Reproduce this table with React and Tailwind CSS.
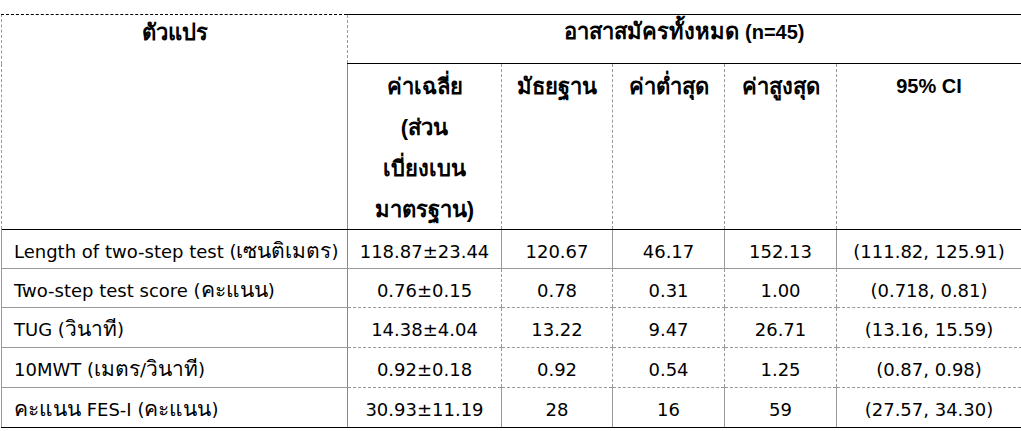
const TH = /([\u0E00-\u0E7F]+)/;

function Mixed({ text, th, lat }) {
  const parts = text.split(TH);
  return (
    <>
      {parts.map((p, i) =>
        p === "" ? null : TH.test(p) ? (
          <span key={i} className={th}>{p}</span>
        ) : (
          <span key={i} className={lat}>{p}</span>
        )
      )}
    </>
  );
}

const bodyTh = "text-[21px]";
const bodyLat = "text-[18px] font-['DejaVu_Sans',sans-serif]";
const headTh = "text-[22px]";
const headLat = "text-[20px]";

export default function App() {
  const rows = [
    ["Length of two-step test (เซนติเมตร)", "118.87±23.44", "120.67", "46.17", "152.13", "(111.82, 125.91)"],
    ["Two-step test score (คะแนน)", "0.76±0.15", "0.78", "0.31", "1.00", "(0.718, 0.81)"],
    ["TUG (วินาที)", "14.38±4.04", "13.22", "9.47", "26.71", "(13.16, 15.59)"],
    ["10MWT (เมตร/วินาที)", "0.92±0.18", "0.92", "0.54", "1.25", "(0.87, 0.98)"],
    ["คะแนน FES-I (คะแนน)", "30.93±11.19", "28", "16", "59", "(27.57, 34.30)"],
  ];
  const rowH = ["h-[39px]", "h-[39px]", "h-[40px]", "h-[40px]", "h-[40px]"];
  const h2 = "align-top text-center font-bold leading-[41px] p-0 ";
  return (
    <div
      className="w-[1021px] h-[431px] bg-white pt-[14px] pl-[1px] text-black"
      style={{ fontFamily: '"Liberation Sans", "Noto Sans", sans-serif' }}
    >
      <table className="table-fixed border-collapse w-[1020px]">
        <colgroup>
          <col className="w-[346px]" />
          <col className="w-[154px]" />
          <col className="w-[111px]" />
          <col className="w-[112px]" />
          <col className="w-[112px]" />
          <col className="w-[185px]" />
        </colgroup>
        <thead>
          <tr className="h-[49px]">
            <th
              rowSpan={2}
              className="align-top text-center font-bold p-0 border-t border-t-black border-l border-dashed border-l-[#999] border-r border-r-[#999] border-b border-b-black"
            >
              <div className="h-[40px] pt-[3px] leading-[30px] text-[22px]">ตัวแปร</div>
            </th>
            <th
              colSpan={5}
              className="align-top text-center font-bold p-0 border-t border-solid border-t-black border-r border-r-[#999] border-b border-b-black"
            >
              <div className="h-[40px] pt-[2px] leading-[30px] text-[22px]">
                <Mixed text="อาสาสมัครทั้งหมด (n=45)" th={headTh} lat={headLat} />
              </div>
            </th>
          </tr>
          <tr className="h-[166px]">
            <th className={h2 + "text-[22px] border-l border-solid border-l-[#888] border-b border-b-black"}>
              <div className="h-[160px] pt-[2px]">
                ค่าเฉลี่ย<br />(ส่วน<br />เบี่ยงเบน<br />มาตรฐาน)
              </div>
            </th>
            <th className={h2 + "text-[22px] border-l border-dashed border-l-[#999]"}>
              <div className="h-[160px] pt-[2px]">มัธยฐาน</div>
            </th>
            <th className={h2 + "text-[22px] border-l border-dashed border-l-[#999]"}>
              <div className="h-[160px] pt-[2px]">ค่าต่ำสุด</div>
            </th>
            <th className={h2 + "text-[22px] border-l border-dashed border-l-[#999]"}>
              <div className="h-[160px] pt-[2px]">ค่าสูงสุด</div>
            </th>
            <th className={h2 + "text-[20px] border-l border-dashed border-l-[#999] border-r border-r-[#999]"}>
              <div className="h-[160px] pt-[2px]">95% CI</div>
            </th>
          </tr>
        </thead>
        <tbody>
          {rows.map((r, i) => {
            const last = i === rows.length - 1;
            return (
              <tr key={i} className={rowH[i]}>
                {r.map((c, j) => (
                  <td
                    key={j}
                    className={
                      "p-0 align-top whitespace-nowrap " +
                      (j === 0 ? "text-left pl-[12px] " : "text-center ") +
                      (i === 0 ? "border-t border-t-black border-solid " : "") +
                      (last
                        ? "border-b border-b-black border-solid "
                        : "border-b border-dashed border-b-[#999] ") +
                      (j === 0
                        ? "border-l border-dashed border-l-[#999] border-r border-solid border-r-[#888] "
                        : "") +
                      (j > 1 ? "border-l border-dashed border-l-[#999] " : "") +
                      (j === 5 ? "border-r border-dashed border-r-[#999] " : "")
                    }
                  >
                    <div className="h-[34px] pt-[10px] leading-[22px] text-[21px]">
                      <Mixed text={c} th={bodyTh} lat={bodyLat} />
                    </div>
                  </td>
                ))}
              </tr>
            );
          })}
        </tbody>
      </table>
    </div>
  );
}
